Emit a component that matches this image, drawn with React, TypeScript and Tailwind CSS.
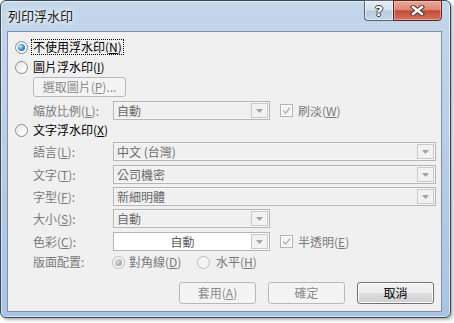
import React from "react";

function U({ c }: { c: string }) {
  return <span className="underline underline-offset-[1px] decoration-[1px]">{c}</span>;
}

function Radio({ checked, disabled }: { checked?: boolean; disabled?: boolean }) {
  return (
    <span
      className={`shrink-0 w-[13px] h-[13px] rounded-full border flex items-center justify-center ${
        disabled
          ? "border-[#bcbcbc] bg-[#f4f4f4]"
          : "border-[#8a8a8a] bg-[radial-gradient(circle_at_70%_70%,#ffffff_0%,#f2f2f2_45%,#d8d8d8_100%)] shadow-[inset_0_0_0_1px_#f8f8f8]"
      }`}
    >
      {checked && (
        <span
          className={`w-[7px] h-[7px] rounded-full ${
            disabled
              ? "bg-[radial-gradient(circle_at_35%_35%,#e0e0e0_0%,#a5a5a5_70%,#8c8c8c_100%)]"
              : "bg-[radial-gradient(circle_at_35%_35%,#c4ecff_0%,#3e9be2_45%,#0c4c8f_100%)]"
          }`}
        />
      )}
    </span>
  );
}

function Check() {
  return (
    <span className="shrink-0 w-[13px] h-[13px] border border-[#b3b3b3] bg-[#f4f4f4] shadow-[inset_0_0_0_1px_#ffffff] flex items-center justify-center">
      <svg width="9" height="9" viewBox="0 0 9 9">
        <path d="M1.2 4.6 L3.6 7.2 L8 1.6" fill="none" stroke="#a9a9a9" strokeWidth="1.2" />
      </svg>
    </span>
  );
}

function Arrow() {
  return (
    <svg width="7" height="4" viewBox="0 0 7 4">
      <path d="M0 0 H7 L3.5 4 Z" fill="#a3a3a3" />
    </svg>
  );
}

function Combo({ w, text, white, center }: { w: string; text: string; white?: boolean; center?: boolean }) {
  return (
    <div
      className={`flex h-[19px] border shrink-0 ${w} ${
        white ? "bg-white border-[#b5b5b5]" : "bg-[#f0f0f0] border-[#b5b5b5] shadow-[inset_0_0_0_1px_#f7f7f7]"
      }`}
    >
      <div
        className={`flex-1 flex items-center ${center ? "justify-center" : "pl-[3px]"} ${
          white ? "text-[#5a5a5a]" : "text-[#6a6a6a]"
        }`}
      >
        {text}
      </div>
      <div className="w-[17px] my-[1px] mr-[1px] border border-[#c9c9c9] bg-[#f2f2f2] flex items-center justify-center">
        <Arrow />
      </div>
    </div>
  );
}

function Label({ children }: { children: React.ReactNode }) {
  return <div className="w-[98px] pl-[18px] shrink-0 text-[#7a7a7a] whitespace-nowrap">{children}</div>;
}

export default function App() {
  return (
    <div className="w-[454px] h-[323px] bg-white font-['Noto_Sans_CJK_TC',sans-serif] text-[12px] leading-none text-black">
      <div className="w-[451px] h-[318px] rounded-[6px] border border-[#3a4757] bg-[linear-gradient(180deg,#c3d6ea_0%,#b8cee6_45%,#a9c4e3_100%)] shadow-[inset_0_0_0_1px_rgba(255,255,255,0.55),2px_2px_3px_rgba(0,0,0,0.3)] flex flex-col pl-[6px] pr-[8px] pb-[5px]">
        <div className="h-[30px] flex items-start shrink-0">
          <div className="mt-[8px] ml-[1px] text-[13px] text-[#1b1b1b] [text-shadow:0_0_5px_#ffffff,0_0_8px_#ffffff]">
            列印浮水印
          </div>
          <div className="ml-auto -mt-px flex">
            <div className="w-[29px] h-[21px] border border-[#56677b] border-r-0 rounded-bl-[4px] bg-[linear-gradient(180deg,#e6edf5_0%,#d4e0ed_48%,#b8cadf_52%,#c6d6e9_100%)] shadow-[inset_0_0_0_1px_rgba(255,255,255,0.5)] flex items-center justify-center">
              <span className="text-white font-bold text-[14px] font-['DejaVu_Sans',sans-serif] [text-shadow:1px_0_0_#3a3a3a,-1px_0_0_#3a3a3a,0_1px_0_#3a3a3a,0_-1px_0_#3a3a3a]">
                ?
              </span>
            </div>
            <div className="w-[49px] h-[21px] border border-[#5a2520] rounded-br-[4px] bg-[linear-gradient(180deg,#eaa898_0%,#dc8674_46%,#c44a33_52%,#d27462_100%)] shadow-[inset_0_0_0_1px_rgba(255,220,210,0.45)] flex items-center justify-center">
              <svg width="15" height="11" viewBox="0 0 15 11">
                <path d="M3 2 L12 9 M12 2 L3 9" stroke="#3d2b28" strokeWidth="4.2" strokeLinecap="square" />
                <path d="M3 2 L12 9 M12 2 L3 9" stroke="#ffffff" strokeWidth="2.4" strokeLinecap="square" />
              </svg>
            </div>
          </div>
        </div>

        <div className="h-[281px] shrink-0 border border-[#7e91a8] bg-[#f0f0f0] flex flex-col pt-[6px] pl-[7px] pr-[7px]">
          <div className="flex items-center h-[18px]">
            <Radio checked />
            <span className="ml-[3px] h-[16px] px-[1px] border border-dotted border-black flex items-center whitespace-nowrap">
              不使用浮水印(<U c="N" />)
            </span>
          </div>
          <div className="flex items-center h-[18px] mt-[2px]">
            <Radio />
            <span className="ml-[5px] whitespace-nowrap">
              圖片浮水印(<U c="I" />)
            </span>
          </div>
          <div className="ml-[18px] mt-[1px] w-[93px] h-[20px] border border-[#b5b9bc] rounded-[3px] bg-[#f4f4f4] text-[#8a8a8a] flex items-center justify-center whitespace-nowrap">
            選取圖片(<U c="P" />)...
          </div>
          <div className="flex items-center h-[19px] mt-[4px]">
            <Label>
              縮放比例(<U c="L" />):
            </Label>
            <Combo w="w-[157px]" text="自動" />
            <span className="ml-[10px]">
              <Check />
            </span>
            <span className="ml-[5px] text-[#7a7a7a] whitespace-nowrap">
              刷淡(<U c="W" />)
            </span>
          </div>
          <div className="flex items-center h-[18px] mt-[1px]">
            <Radio />
            <span className="ml-[5px] whitespace-nowrap">
              文字浮水印(<U c="X" />)
            </span>
          </div>
          <div className="flex items-center h-[19px] mt-[3px]">
            <Label>
              語言(<U c="L" />):
            </Label>
            <Combo w="w-[323px]" text="中文 (台灣)" />
          </div>
          <div className="flex items-center h-[19px] mt-[4px]">
            <Label>
              文字(<U c="T" />):
            </Label>
            <Combo w="w-[323px]" text="公司機密" />
          </div>
          <div className="flex items-center h-[19px] mt-[3px]">
            <Label>
              字型(<U c="F" />):
            </Label>
            <Combo w="w-[323px]" text="新細明體" />
          </div>
          <div className="flex items-center h-[19px] mt-[3px]">
            <Label>
              大小(<U c="S" />):
            </Label>
            <Combo w="w-[157px]" text="自動" />
          </div>
          <div className="flex items-center h-[19px] mt-[4px]">
            <Label>
              色彩(<U c="C" />):
            </Label>
            <Combo w="w-[157px]" text="自動" white center />
            <span className="ml-[10px]">
              <Check />
            </span>
            <span className="ml-[5px] text-[#7a7a7a] whitespace-nowrap">
              半透明(<U c="E" />)
            </span>
          </div>
          <div className="flex items-center h-[18px] mt-[2px]">
            <div className="w-[97px] pl-[18px] shrink-0 text-[#7a7a7a] whitespace-nowrap">版面配置:</div>
            <div className="w-[85px] flex items-center shrink-0">
              <Radio checked disabled />
              <span className="ml-[4px] text-[#7a7a7a] whitespace-nowrap">
                對角線(<U c="D" />)
              </span>
            </div>
            <Radio disabled />
            <span className="ml-[6px] text-[#7a7a7a] whitespace-nowrap">
              水平(<U c="H" />)
            </span>
          </div>
          <div className="flex justify-end gap-[12px] mt-[11px]">
            <div className="w-[77px] h-[22px] border border-[#b5b9bc] rounded-[3px] bg-[#f4f4f4] text-[#8a8a8a] flex items-center justify-center whitespace-nowrap">
              套用(<U c="A" />)
            </div>
            <div className="w-[77px] h-[22px] border border-[#b5b9bc] rounded-[3px] bg-[#f4f4f4] text-[#8a8a8a] flex items-center justify-center">
              確定
            </div>
            <div className="w-[77px] h-[22px] border border-[#707070] rounded-[3px] bg-[linear-gradient(180deg,#f2f2f2_0%,#ebebeb_48%,#dddddd_52%,#cfcfcf_100%)] shadow-[inset_0_0_0_1px_#fcfcfc] text-black flex items-center justify-center">
              取消
            </div>
          </div>
        </div>
      </div>
    </div>
  );
}
